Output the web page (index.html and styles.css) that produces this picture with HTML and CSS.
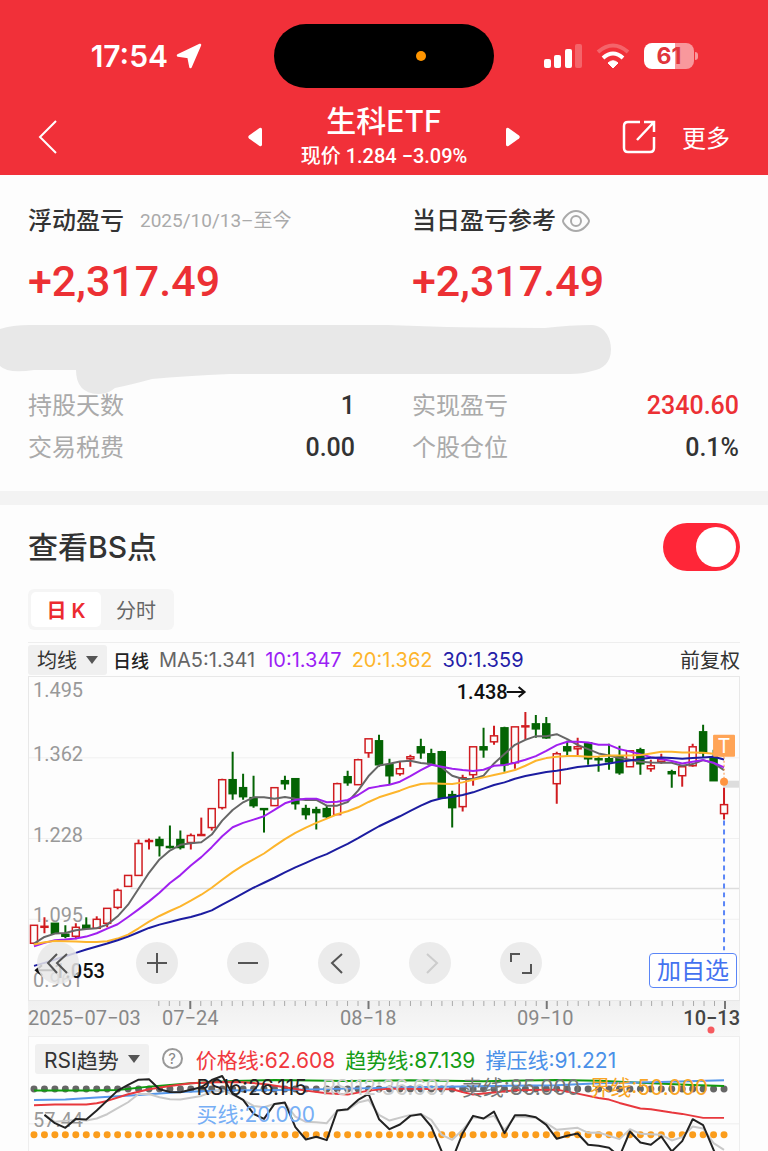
FILE: index.html
```html
<!DOCTYPE html>
<html lang="zh-CN">
<head>
    <meta charset="UTF-8">
    <meta name="viewport" content="width=device-width, initial-scale=1">
    <title>生科ETF</title>
    <link rel="stylesheet" href="styles.css">
</head>
<body>
    <header class="top">
        <div class="status">
            <div class="status-time">
                <span>17:54</span>
                <svg width="26" height="26" viewBox="0 0 26 26"><path d="M24 2L2 12.500L12.500 14L14.500 24Z" fill="#fff" stroke="#fff" stroke-width="2.500" stroke-linejoin="round"/></svg>
            </div>
            <div class="island"><span class="island-dot"></span></div>
            <div class="status-icons">
                <svg width="38" height="24" viewBox="0 0 38 24">
                    <g fill="#fff">
                        <rect x="0" y="15" width="7" height="9" rx="2"/>
                        <rect x="10" y="11" width="7" height="13" rx="2"/>
                        <rect x="21" y="5" width="7" height="19" rx="2"/>
                        <rect x="31" y="0" width="7" height="24" rx="2" opacity=".25"/>
                    </g>
                </svg>
                <svg width="34" height="26" viewBox="0 0 34 26">
                    <g fill="none" stroke="#fff" stroke-width="4">
                        <path d="M2 9Q17 -4 32 9" opacity=".25"/>
                        <path d="M7 15Q17 6 27 15"/>
                    </g>
                    <path d="M12 20Q17 15.500 22 20L17 25Z" fill="#fff" stroke="#fff" stroke-linejoin="round"/>
                </svg>
                <div class="battery">
                    <span class="battery-body">61</span>
                    <span class="battery-tip"></span>
                </div>
            </div>
        </div>
        <nav class="nav">
            <a class="back" href="#" aria-label="返回">
                <svg width="20" height="36" viewBox="0 0 20 36"><path d="M18 2L2 18L18 34" fill="none" stroke="#fff" stroke-width="2"/></svg>
            </a>
            <div class="stock">
                <button class="step" aria-label="上一只"><svg width="16" height="20" viewBox="0 0 16 20"><path d="M12.500 1L2 8.500Q0.500 10 2 11.500L12.500 19Q15 20 15 17.500V2.500Q15 0 12.500 1Z" fill="#fff"/></svg></button>
                <div class="stock-title">
                    <h1>生科ETF</h1>
                    <p>现价 1.284 −3.09%</p>
                </div>
                <button class="step" aria-label="下一只"><svg width="16" height="20" viewBox="0 0 16 20"><path d="M3.500 1L14 8.500Q15.500 10 14 11.500L3.500 19Q1 20 1 17.500V2.500Q1 0 3.500 1Z" fill="#fff"/></svg></button>
            </div>
            <div class="nav-right">
                <button aria-label="分享"><svg width="34" height="34" viewBox="0 0 34 34"><path d="M18 2H6Q2 2 2 6V28Q2 32 6 32H28Q32 32 32 28V17M22 2H32V12M32 2L15 20" fill="none" stroke="#fff" stroke-width="2.500"/></svg></button>
                <a class="more" href="#">更多</a>
            </div>
        </nav>
    </header>

    <section class="summary">
        <div class="profit">
            <h2>浮动盈亏 <span class="range">2025/10/13–至今</span></h2>
            <p class="amount">+2,317.49</p>
        </div>
        <div class="profit">
            <h2>当日盈亏参考
                <svg width="28" height="22" viewBox="0 0 28 22"><g fill="none" stroke="#aaa" stroke-width="2"><path d="M1 11Q1 9 5 5Q9 1 14 1T23 5Q27 9 27 11T23 17Q19 21 14 21T5 17Q1 13 1 11Z"/><circle cx="14" cy="11" r="5"/></g></svg>
            </h2>
            <p class="amount">+2,317.49</p>
        </div>
        <svg class="smear" viewBox="0 0 768 70" aria-hidden="true"><path d="M0 4Q12 0 30 0H388Q460 3 545 3Q570 0 592 0C604 1 611 12 611 24C611 38 603 44 592 46Q583 49 570 49H230Q185 51 152 54Q130 60 115 63Q108 69 98 69Q76 68 76 45H34Q8 49 0 41Z" fill="#e8e8e8"/></svg>
        <dl>
            <div><dt>持股天数</dt><dd>1</dd></div>
            <div><dt>实现盈亏</dt><dd class="up">2340.60</dd></div>
            <div><dt>交易税费</dt><dd>0.00</dd></div>
            <div><dt>个股仓位</dt><dd>0.1%</dd></div>
        </dl>
    </section>

    <main class="bs">
        <div class="bs-head">
            <label for="bsSwitch">查看BS点</label>
            <input class="switch" type="checkbox" id="bsSwitch" checked>
        </div>
        <div class="tabs">
            <button class="tab active">日 K</button>
            <button class="tab">分时</button>
        </div>

        <div class="ma-bar">
            <button class="pick">均线 <span class="caret"></span></button>
            <span class="ma-name">日线</span>
            <span class="ma5">MA5:1.341</span>
            <span class="ma10">10:1.347</span>
            <span class="ma20">20:1.362</span>
            <span class="ma30">30:1.359</span>
            <button class="adjust">前复权</button>
        </div>

        <div class="chart">
            <svg id="kline" viewBox="0 0 712 324" role="img" aria-label="日K线">
                <g stroke="#f0f0f0">
                    <path d="M0 81H712M0 162H712M0 243H712"/>
                </g>
                <path d="M102 212H712" stroke="#ddd" stroke-width="1.500"/>
                <g class="axis">
                    <text x="4" y="20">1.495</text>
                    <text x="4" y="84">1.362</text>
                    <text x="4" y="165">1.228</text>
                    <text x="4" y="246">1.095</text>
                    <text x="4" y="311">0.961</text>
                </g>
                <rect x="696" y="104" width="16" height="7" fill="#ddd"/>
                <g id="candles"></g>
                <g id="averages"></g>
                <g class="mark">
                    <text x="429" y="22">1.438</text>
                    <path d="M479 15H497M491 10L497 15L491 20" fill="none" stroke="#111" stroke-width="2"/>
                    <text x="25" y="302">1.053</text>
                    <path d="M8 294H25M13 289L7 294L13 299" fill="none" stroke="#111" stroke-width="2"/>
                </g>
                <path d="M697 144V274" stroke="#5b86f7" stroke-width="2" stroke-dasharray="5 4"/>
                <path d="M697 80V104" stroke="#ff9440" stroke-dasharray="2 2"/>
                <rect x="686" y="58" width="22" height="22" rx="1" fill="#ffa456"/>
                <text class="t-mark" x="697" y="76">T</text>
                <circle cx="697" cy="105" r="4" fill="#ff9440"/>
            </svg>
            <div class="tools">
                <button class="first" aria-label="最早"><svg width="42" height="42" viewBox="0 0 42 42"><path d="M20 12L11 21L20 31M30 12L20 21L30 31"/></svg></button>
                <button aria-label="放大"><svg width="42" height="42" viewBox="0 0 42 42"><path d="M11 21H31M21 11V31"/></svg></button>
                <button aria-label="缩小"><svg width="42" height="42" viewBox="0 0 42 42"><path d="M11 21H31"/></svg></button>
                <button aria-label="左移"><svg width="42" height="42" viewBox="0 0 42 42"><path d="M24 12L14 21L24 31"/></svg></button>
                <button aria-label="右移" disabled><svg width="42" height="42" viewBox="0 0 42 42"><path d="M18 12L28 21L18 31"/></svg></button>
                <button aria-label="全屏"><svg width="42" height="42" viewBox="0 0 42 42"><path d="M11 20V12H20M22 31H31V22"/></svg></button>
            </div>
            <button class="watch">加自选</button>
        </div>

        <svg class="dates" viewBox="0 0 712 35">
            <g id="ticks"></g>
            <text x="0" y="24">2025−07−03</text>
            <text x="134" y="24">07−24</text>
            <text x="312" y="24">08−18</text>
            <text x="489" y="24">09−10</text>
            <text class="today" x="712" y="24">10−13</text>
            <circle cx="683" cy="29" r="3.500" fill="#f65a5f"/>
        </svg>

        <div class="rsi">
            <div class="rsi-bar">
                <button class="pick">RSI趋势 <span class="caret"></span></button>
                <button class="help" aria-label="说明">?</button>
                <span class="price">价格线:62.608</span>
                <span class="trend">趋势线:87.139</span>
                <span class="press">撑压线:91.221</span>
            </div>
            <svg id="rsi" viewBox="0 0 712 77" role="img" aria-label="RSI趋势">
                <path d="M0 50H712" stroke="#eee"/>
                <text x="4" y="53" fill="#999" class="level">57.44</text>
                <g id="rsiDots"></g>
                <g id="rsiLines"></g>
                <text x="168" y="21" fill="#222">RSI6:26.115</text>
                <text x="294" y="21" fill="#ccc">RSI12:36.697</text>
                <text x="434" y="21" fill="#777">卖线:85.000</text>
                <text x="562" y="21" fill="#f9a526">界线:50.000</text>
                <text x="168" y="48" fill="#76aef5">买线:20.000</text>
            </svg>
        </div>
    </main>
    <script src="chart.js"></script>
</body>
</html>
```

FILE: styles.css
```css
* {
    box-sizing: border-box;
}

body {
    margin: 0;
    background-color: #fdfdfd;
    color: #333;
    font-family: Inter, "Noto Sans CJK SC", sans-serif;
    overflow-x: hidden;
}

h1, h2, p, dl, dd {
    margin: 0;
    font-weight: 400;
}

button {
    border: none;
    padding: 0;
    background: none;
    color: inherit;
    font: inherit;
    cursor: pointer;
}

svg {
    display: block;
    flex-shrink: 0;
}

/* Red header */
.top {
    background-color: #f13039;
    color: #fff;
    padding-top: 24px;
}

.status {
    display: grid;
    grid-template-columns: 1fr 220px 1fr;
    align-items: center;
}

.status-time {
    display: flex;
    align-items: center;
    justify-content: flex-end;
    gap: 8px;
    padding-right: 72px;
    font-size: 30px;
    font-weight: 600;
}

.island {
    height: 64px;
    border-radius: 32px;
    background-color: #000;
    display: flex;
    align-items: center;
    justify-content: flex-end;
    padding-right: 68px;
}

.island-dot {
    width: 10px;
    height: 10px;
    border-radius: 50%;
    background-color: #ff9500;
}

.status-icons {
    display: flex;
    align-items: center;
    gap: 14px;
    padding-left: 50px;
}

.battery {
    display: flex;
    align-items: center;
    gap: 1px;
}

.battery-body {
    width: 50px;
    height: 26px;
    border-radius: 8px;
    background: linear-gradient(90deg, #fff 61%, #f8989c 61%);
    color: #e0353c;
    font-size: 23px;
    font-weight: 700;
    line-height: 26px;
    text-align: center;
}

.battery-tip {
    width: 3px;
    height: 8px;
    border-radius: 0 3px 3px 0;
    background-color: #f8989c;
}

.nav {
    display: grid;
    grid-template-columns: 1fr 274px 1fr;
    align-items: center;
    height: 87px;
    padding: 10px 38px 0;
}

.stock {
    display: flex;
    align-items: center;
    justify-content: space-between;
}

.stock-title {
    text-align: center;
}

.stock-title h1 {
    font-size: 30px;
    font-weight: 500;
    line-height: 38px;
}

.stock-title p {
    font-family: Roboto, "Noto Sans CJK SC", sans-serif;
    font-size: 20px;
    font-weight: 500;
    line-height: 32px;
}

.nav-right {
    display: flex;
    align-items: center;
    justify-content: flex-end;
    gap: 26px;
}

.more {
    color: #fff;
    font-size: 24px;
    text-decoration: none;
}

/* Profit summary */
.summary {
    display: grid;
    grid-template-columns: 1fr 1fr;
    padding: 28px 0 22px;
    border-bottom: 14px solid #f3f3f3;
}

.profit {
    padding-left: 28px;
}

.profit h2 {
    display: flex;
    align-items: center;
    gap: 6px;
    font-size: 24px;
    font-weight: 500;
    line-height: 36px;
}

.range {
    margin-left: 10px;
    color: #aaa;
    font-family: Roboto, "Noto Sans CJK SC", sans-serif;
    font-size: 19px;
    font-weight: 400;
}

.amount {
    margin-top: 14px;
    color: #ec3034;
    font-family: Roboto, sans-serif;
    font-size: 43px;
    font-weight: 500;
    line-height: 56px;
}

.smear {
    grid-column: 1 / 3;
    width: 100%;
    margin-top: 16px;
    overflow: visible;
}

.summary dl {
    grid-column: 1 / 3;
    display: grid;
    grid-template-columns: 1fr 1fr;
    margin-top: -10px;
}

.summary dl div {
    display: flex;
    justify-content: space-between;
    padding: 0 29px 0 28px;
    line-height: 42px;
}

.summary dt {
    color: #aaa;
    font-size: 24px;
}

.summary dd {
    font-family: Roboto, sans-serif;
    font-size: 25px;
    font-weight: 500;
}

.summary .up {
    color: #ec3034;
}

/* BS chart section */
.bs {
    padding: 16px 28px 0;
}

.bs-head {
    display: flex;
    align-items: center;
    justify-content: space-between;
    font-size: 30px;
    font-weight: 500;
    line-height: 52px;
}

.switch {
    appearance: none;
    width: 77px;
    height: 48px;
    margin: 0;
    padding: 4px;
    border-radius: 24px;
    background-color: #ff2638;
    display: flex;
    justify-content: flex-end;
    cursor: pointer;
}

.switch::before {
    content: "";
    width: 40px;
    height: 40px;
    border-radius: 50%;
    background-color: #fff;
}

.switch:not(:checked) {
    background-color: #ddd;
    justify-content: flex-start;
}

.tabs {
    display: inline-flex;
    margin-top: 16px;
    padding: 3px;
    border-radius: 6px;
    background-color: #f5f5f5;
    vertical-align: top;
}

.tab {
    width: 70px;
    height: 35px;
    border-radius: 5px;
    color: #666;
    font-size: 20px;
}

.tab.active {
    background-color: #fff;
    color: #ec2a30;
    font-weight: 600;
}

.ma-bar {
    display: flex;
    align-items: center;
    gap: 10px;
    height: 34px;
    margin-top: 12px;
    border-top: 1px solid #eee;
    font-size: 20px;
    white-space: nowrap;
}

.pick {
    display: flex;
    align-items: center;
    gap: 9px;
    height: 30px;
    padding: 0 9px;
    border-radius: 3px;
    background-color: #f0f0f0;
}

.caret {
    border: 6px solid transparent;
    border-top: 8px solid #555;
    border-bottom: none;
}

.ma-name {
    margin-left: -4px;
    color: #222;
    font-size: 18px;
    font-weight: 500;
}

.ma5 { color: #666; }
.ma10 { color: #9b1ff5; }
.ma20 { color: #fdb52c; }
.ma30 { color: #2420a8; }

.adjust {
    margin-left: auto;
}

.chart {
    position: relative;
    border: 1px solid #e8e8e8;
}

#kline {
    width: 100%;
}

.axis text,
.mark text,
.dates text,
.level {
    font-family: Roboto, sans-serif;
    font-size: 20px;
}

.axis text {
    fill: #999;
}

.mark text {
    fill: #111;
    font-weight: 500;
}

.t-mark {
    fill: #fff;
    font-size: 20px;
    text-anchor: middle;
}

#averages polyline,
#rsiLines polyline {
    fill: none;
    stroke-width: 2;
    stroke-linejoin: round;
}

.tools {
    position: absolute;
    left: 8px;
    bottom: 16px;
    display: flex;
    gap: 49px;
}

.tools button {
    width: 42px;
    height: 42px;
    border-radius: 50%;
    background-color: rgba(232, 232, 232, 0.85);
}

.tools .first {
    margin-right: 8px;
}

.tools path {
    fill: none;
    stroke: #555;
    stroke-width: 2;
}

.tools button:disabled path {
    stroke: #ccc;
}

.watch {
    position: absolute;
    right: 2px;
    bottom: 12px;
    width: 88px;
    height: 35px;
    border: 1px solid #5b86f7;
    border-radius: 4px;
    background-color: #fff;
    color: #4472f0;
    font-size: 24px;
    line-height: 32px;
}

.dates {
    width: 100%;
    background: linear-gradient(#f0f0f0, #f8f8f8);
}

.dates text {
    fill: #888;
}

.dates .today {
    fill: #444;
    font-weight: 500;
    text-anchor: end;
}

/* RSI panel */
.rsi {
    border: 1px solid #eee;
    border-bottom: none;
}

.rsi-bar {
    display: flex;
    align-items: center;
    gap: 10px;
    height: 37px;
    padding: 6px 6px 0;
    font-size: 21px;
    white-space: nowrap;
}

.help {
    width: 21px;
    height: 21px;
    margin: 0 3px;
    border: 2px solid #999;
    border-radius: 50%;
    color: #888;
    font-size: 15px;
    line-height: 17px;
}

.price { color: #f0383e; }
.trend { color: #159c15; }
.press { color: #4a90e8; }

#rsi {
    width: 100%;
    font-size: 21px;
}
```

FILE: chart.js
```js
// high, body top, body bottom, low; r = rising, g = falling
const candles = [
    'r 249 249 267 268', 'r 241 250 251 257', 'g 247 247 257 257', 'g 249 258 260 262', 'r 247 251 260 263',
    'g 241 249 252 252', 'r 240 243 252 252', 'r 232 232 247 251', 'r 212 214 231 233', 'r 199 199 210 210',
    'r 163 167 199 199', 'r 162 164 165 173', 'g 160 163 169 180', 'g 149 170 171 172', 'g 154 163 171 173',
    'r 157 159 166 173', 'r 141 158 159 159', 'r 132 132 151 154', 'r 102 103 131 133', 'g 75 103 117 123',
    'g 97 111 120 123', 'g 99 121 129 131', 'g 132 132 133 156', 'r 111 111 129 129', 'g 99 104 107 113',
    'g 102 102 127 133', 'g 128 132 138 143', 'g 130 133 136 153', 'g 129 132 140 142', 'r 106 107 138 138',
    'g 94 100 106 109', 'r 82 83 108 108', 'r 62 62 76 81', 'g 58 64 88 90', 'g 82 88 99 108',
    'r 85 92 97 99', 'r 78 80 82 90', 'g 62 70 76 82', 'g 72 77 87 88', 'g 74 75 121 121',
    'g 114 118 131 151', 'r 98 101 130 135', 'r 70 70 98 109', 'g 51 70 73 81', 'r 49 59 65 68',
    'g 50 51 88 95', 'r 50 50 86 92', 'r 35 49 50 63', 'g 38 47 52 61', 'g 40 47 61 62',
    'r 75 77 107 127', 'g 64 70 74 79', 'r 61 70 72 80', 'g 66 66 82 88', 'g 80 82 83 95',
    'g 67 82 85 93', 'g 69 79 96 98', 'r 74 74 90 90', 'g 71 73 87 98', 'r 83 89 92 95',
    'r 77 83 85 87', 'g 93 95 97 111', 'r 90 90 99 110', 'r 67 70 89 90', 'g 48 55 76 81',
    'g 73 80 104 104', 'r 111 128 137 143'
];

// one value per candle, three units to a chart pixel
const averages = {
    '#666666': [820, 800, 790, 788, 780, 776, 774, 763, 738, 703, 655, 607, 567, 540, 523, 518, 515, 492, 450, 418, 395, 380, 380, 384, 379, 384, 388, 388, 405, 405, 394, 360, 316, 284, 279, 272, 270, 277, 280, 290, 315, 325, 325, 315, 278, 250, 222, 207, 196, 196, 190, 205, 222, 235, 248, 254, 262, 267, 273, 275, 276, 276, 285, 280, 268, 277, 298],
    '#a020f0': [828, 818, 810, 808, 805, 799, 789, 775, 762, 740, 717, 693, 667, 638, 614, 585, 560, 530, 497, 470, 457, 447, 437, 418, 398, 388, 384, 384, 395, 393, 388, 373, 353, 347, 342, 333, 316, 298, 282, 288, 294, 298, 301, 297, 285, 283, 276, 267, 256, 240, 223, 213, 213, 215, 222, 222, 235, 242, 250, 259, 265, 271, 278, 273, 268, 276, 290],
    '#fdb52c': [823, 816, 812, 813, 814, 815, 815, 813, 805, 793, 774, 754, 737, 722, 708, 691, 673, 652, 628, 605, 585, 567, 549, 527, 506, 487, 471, 457, 444, 431, 422, 410, 394, 380, 370, 360, 348, 340, 338, 339, 340, 335, 327, 320, 313, 306, 298, 285, 270, 262, 258, 256, 256, 258, 257, 254, 254, 254, 253, 248, 243, 243, 245, 245, 246, 249, 255],
    '#1c1ca0': [887, 878, 868, 858, 848, 838, 829, 820, 810, 799, 786, 773, 763, 755, 747, 740, 731, 720, 703, 686, 669, 652, 637, 622, 606, 591, 577, 563, 551, 535, 520, 503, 485, 467, 452, 437, 421, 405, 391, 383, 379, 373, 365, 354, 343, 335, 324, 316, 310, 304, 300, 295, 289, 286, 283, 278, 273, 269, 265, 261, 260, 262, 264, 262, 260, 258, 266]
};

// [candle index, value] pairs, same units
const rsiLines = {
    '#0f9a0f': [[0, 272], [5, 272], [8, 270], [11, 260], [15, 250], [19, 243], [23, 240], [30, 243], [36, 241], [43, 244], [50, 240], [54, 242], [58, 248], [63, 255], [66, 258]],
    '#5597ea': [[0, 300], [3, 299], [6, 293], [10, 285], [14, 276], [18, 272], [24, 270], [30, 266], [36, 262], [44, 258], [50, 256], [54, 250], [60, 246], [66, 241]],
    '#e8383d': [[0, 316], [2, 314], [5, 314], [6, 310], [7, 303], [9, 283], [11, 268], [13, 258], [15, 250], [18, 246], [20, 247], [22, 252], [24, 262], [26, 272], [28, 280], [30, 284], [32, 272], [34, 266], [40, 268], [41, 276], [42, 284], [44, 278], [46, 271], [50, 269], [52, 281], [54, 294], [55, 299], [56, 309], [58, 326], [59, 328], [61, 338], [62, 342], [64, 354], [66, 354]],
    '#c9c9c9': [[1, 345], [2, 366], [4, 360], [5, 362], [6, 356], [7, 343], [8, 325], [9, 307], [10, 282], [11, 282], [12, 292], [13, 298], [14, 299], [16, 288], [17, 276], [18, 270], [19, 284], [20, 300], [21, 318], [22, 322], [23, 312], [24, 310], [25, 350], [26, 366], [27, 367], [28, 370], [29, 332], [30, 330], [31, 308], [32, 300], [33, 345], [34, 362], [36, 345], [37, 342], [38, 360], [39, 405], [40, 420], [41, 390], [42, 352], [43, 356], [44, 348], [45, 390], [46, 350], [48, 354], [49, 370], [50, 390], [52, 384], [53, 399], [54, 398], [56, 418], [57, 388], [58, 402], [60, 405], [61, 422], [62, 412], [63, 380], [64, 386], [65, 430], [66, 450]],
    '#222222': [[1, 345], [2, 370], [3, 384], [4, 357], [5, 359], [6, 332], [8, 272], [9, 255], [10, 239], [11, 238], [12, 268], [13, 276], [14, 277], [16, 262], [17, 240], [18, 228], [19, 282], [20, 300], [21, 342], [22, 357], [23, 312], [24, 308], [25, 382], [26, 419], [27, 411], [28, 421], [29, 332], [30, 328], [31, 300], [32, 282], [33, 358], [34, 388], [35, 374], [36, 348], [37, 343], [38, 380], [39, 455], [40, 480], [41, 400], [42, 348], [43, 356], [44, 335], [45, 400], [46, 346], [47, 346], [48, 352], [49, 375], [50, 417], [51, 408], [52, 401], [53, 435], [54, 438], [55, 444], [56, 470], [57, 395], [58, 428], [59, 435], [60, 410], [61, 455], [62, 424], [63, 358], [64, 376], [65, 450], [66, 520]]
};

const SVG = 'http://www.w3.org/2000/svg';

function draw(parent, tag, attrs) {
    const el = document.createElementNS(SVG, tag);
    for (const name in attrs) {
        el.setAttribute(name, attrs[name]);
    }
    document.getElementById(parent).appendChild(el);
}

function xOf(i) {
    return 5 + i * 692 / 66;
}

candles.forEach((row, i) => {
    const [kind, ...nums] = row.split(' ');
    const [high, top, bottom, low] = nums.map(Number);
    const x = xOf(i);
    const color = kind === 'r' ? '#d01c20' : '#046404';
    draw('candles', 'path', { d: `M${x} ${high}V${top}M${x} ${bottom}V${low}`, stroke: color, 'stroke-width': 2 });
    draw('candles', 'rect', {
        x: x - 3.5, y: top, width: 7, height: bottom - top,
        fill: kind === 'r' ? 'none' : color, stroke: color, 'stroke-width': 1.5
    });
});

for (const color in averages) {
    const points = averages[color].map((v, i) => `${xOf(i)},${(v - 18) / 3}`).join(' ');
    draw('averages', 'polyline', { points, stroke: color });
}

for (let i = 0; i < 67; i++) {
    draw('rsiDots', 'circle', { cx: xOf(i), cy: 15, r: 3.5, fill: '#666' });
    draw('rsiDots', 'circle', { cx: xOf(i), cy: 61, r: 3.5, fill: '#fb9d1c' });
}

for (const color in rsiLines) {
    const points = rsiLines[color].map(([i, v]) => `${xOf(i)},${(v - 222) / 3}`).join(' ');
    draw('rsiLines', 'polyline', { points, stroke: color });
}

for (let i = 12; i < 67; i++) {
    const major = [15, 32, 49, 66].includes(i);
    draw('ticks', 'path', { d: `M${xOf(i)} 0V${major ? 8 : 5}`, stroke: major ? '#777' : '#aaa', 'stroke-width': major ? 2 : 1 });
}
```
